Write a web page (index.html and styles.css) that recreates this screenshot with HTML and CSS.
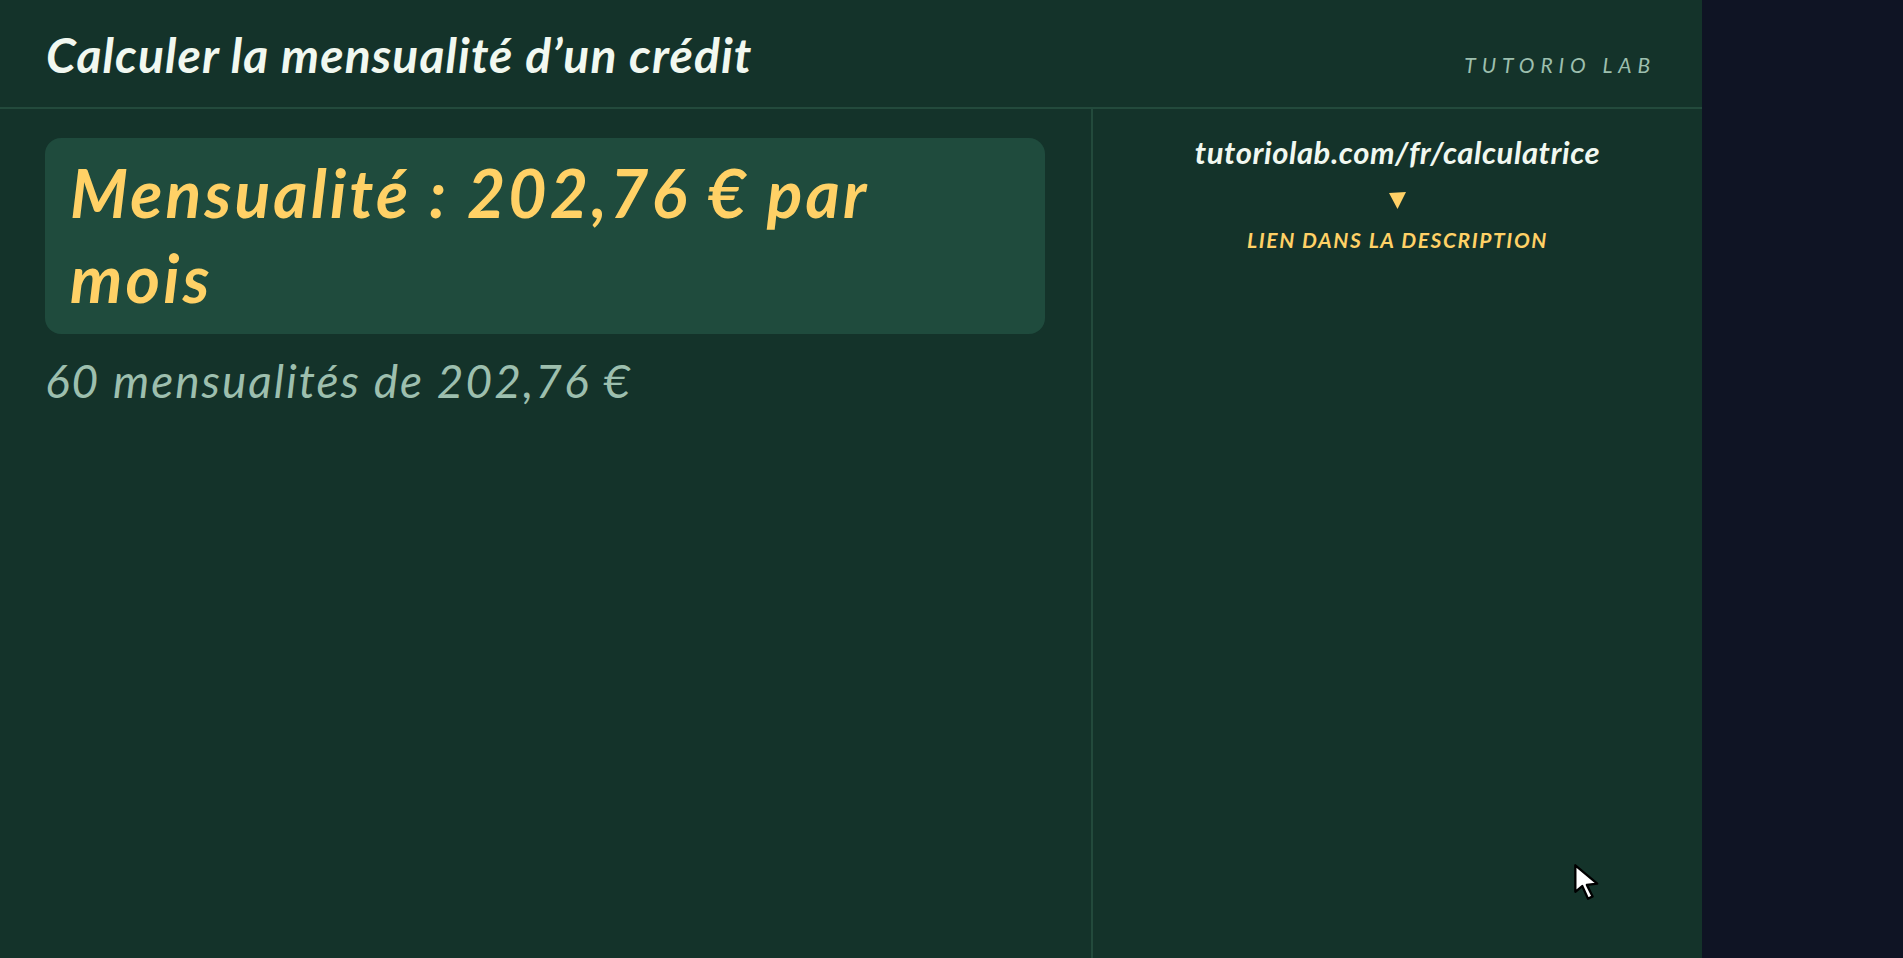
FILE: index.html
```html
<!DOCTYPE html>
<html lang="fr">
  <head>
    <meta charset="UTF-8" />
    <meta name="viewport" content="width=device-width, initial-scale=1.0" />
    <title>Calculer la mensualité d'un crédit</title>
    <link rel="stylesheet" href="styles.css">
  </head>
  <body>
    <div class="panel">
      <!-- Titre -->
      <div class="header">
        <h1>Calculer la mensualité d’un crédit</h1>
        <div class="brand">TUTORIO LAB</div>
      </div>

      <div class="columns">
        <!-- Résultat -->
        <div class="main-content">
          <div class="result-box">Mensualité : 202,76 € par mois</div>
          <p class="detail">60 mensualités de 202,76 €</p>
        </div>

        <!-- Lien -->
        <div class="side">
          <div class="url">tutoriolab.com/fr/calculatrice</div>
          <svg class="arrow" width="17" height="17" viewBox="0 0 16 16">
            <polygon points="0,1 16,0 8,16" fill="#ffd166" />
          </svg>
          <div class="link-note">LIEN DANS LA DESCRIPTION</div>
        </div>
      </div>
    </div>

    <!-- Curseur -->
    <svg class="cursor" width="30" height="38" viewBox="0 0 26 33">
      <path d="M2 2 L2 25 L8 20 L13 31 L17 29 L12 19 L21 18 Z" fill="#fff" stroke="#000" stroke-width="2" stroke-linejoin="round" />
    </svg>
  </body>
</html>
```

FILE: styles.css
```css
body {
  margin: 0;
  height: 958px;
  overflow: hidden;
  background-color: #0f1424;
  font-family: "Lato", "Noto Sans", sans-serif;
  font-style: italic;
}

.panel {
  width: 1702px;
  height: 958px;
  background-color: #14332a;
  display: flex;
  flex-direction: column;
}

/* Titre */
.header {
  height: 107px;
  padding: 0 46px;
  border-bottom: 2px solid #234a3c;
  display: flex;
  justify-content: space-between;
  align-items: center;
}

.header h1 {
  margin: 2px 0 0;
  font-size: 48px;
  font-weight: 700;
  letter-spacing: 1.1px;
  color: #f1f8f0;
}

.brand {
  margin: 21px 0 0;
  font-size: 21px;
  letter-spacing: 5.9px;
  color: #9dbfae;
}

.columns {
  flex: 1;
  display: flex;
}

/* Résultat */
.main-content {
  width: 1000px;
  padding: 29px 46px 29px 45px;
  border-right: 2px solid #234a3c;
}

.result-box {
  box-sizing: border-box;
  height: 196px;
  padding: 12px 40px 12px 25px;
  border-radius: 16px;
  background-color: #1f4b3d;
  color: #ffd166;
  font-size: 66px;
  font-weight: 700;
  letter-spacing: 3.2px;
  line-height: 85px;
}

.detail {
  margin: 19px 0 0;
  font-size: 46px;
  letter-spacing: 2px;
  color: #9dbfae;
}

/* Lien */
.side {
  flex: 1;
  padding-top: 24px;
  display: flex;
  flex-direction: column;
  align-items: center;
}

.url {
  font-size: 31px;
  font-weight: 700;
  letter-spacing: 0.57px;
  color: #f1f8f0;
}

.arrow {
  margin-top: 21px;
}

.link-note {
  margin-top: 18px;
  font-size: 21px;
  font-weight: 700;
  letter-spacing: 1.6px;
  color: #ffd166;
}

.cursor {
  position: absolute;
  left: 1573px;
  top: 863px;
}
```
